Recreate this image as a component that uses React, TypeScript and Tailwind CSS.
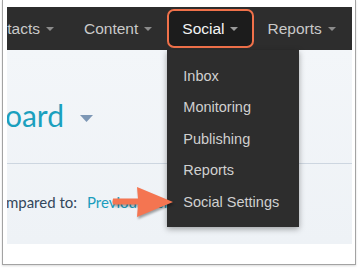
import React from "react";

const Caret = ({ className }: { className: string }) => (
  <svg width="8" height="4" viewBox="0 0 8 4" className={className}>
    <path d="M0 0h8L4 4z" fill="currentColor" />
  </svg>
);

const menuItems = ["Inbox", "Monitoring", "Publishing", "Reports", "Social Settings"];

const App = () => {
  return (
    <div className="w-[358px] h-[268px] bg-white pl-[2px] overflow-hidden">
      {/* screenshot frame */}
      <div className="w-[354px] h-[265px] border-l border-r border-b border-[#a3a3a3] pl-[4px] pt-[7px] shadow-[0_1px_2px_rgba(0,0,0,0.15)]">
        <div className="relative w-[345px] h-[237px] overflow-hidden">
          {/* top nav */}
          <nav
            className="relative z-20 h-[43px] bg-[#2d2d2d] flex items-stretch gap-[30px] text-[15.5px] text-[#c9c9c9]"
            style={{ fontFamily: '"Liberation Sans", Arial, sans-serif' }}
          >
            <div className="flex items-center gap-[6px]">
              <div className="w-[33px] flex justify-end overflow-hidden whitespace-nowrap">
                <span>Contacts</span>
              </div>
              <Caret className="text-[#8b8b8b] mt-[1px]" />
            </div>
            <div className="flex items-center gap-[6px]">
              <span>Content</span>
              <Caret className="text-[#8b8b8b] mt-[1px]" />
            </div>
            <div className="relative flex items-center gap-[5px] text-[#f4f4f4]">
              {/* highlight box */}
              <div className="absolute -left-[15px] -right-[16px] top-[2px] bottom-[2px] rounded-[7px] border-2 border-[#f0714a] bg-[#1c1c1c]" />
              <span className="relative">Social</span>
              <Caret className="relative text-[#9a9a9a] mt-[1px]" />
              {/* dropdown */}
              <ul className="absolute top-full -left-[15px] w-[132px] h-[177px] bg-[#2d2d2d] pt-[11px] pl-[16px] shadow-[0_2px_6px_rgba(0,0,0,0.35)] text-[14.5px] text-[#d0d0d0]">
                {menuItems.map((item) => (
                  <li key={item} className="h-[31.5px] flex items-center whitespace-nowrap">
                    {item}
                  </li>
                ))}
              </ul>
            </div>
            <div className="flex items-center gap-[6px]">
              <span>Reports</span>
              <Caret className="text-[#8b8b8b] mt-[1px]" />
            </div>
          </nav>

          {/* page body */}
          <div
            className="h-[194px] bg-gradient-to-b from-[#f3f6f9] to-[#eef2f6]"
            style={{ fontFamily: "Lato, sans-serif" }}
          >
            <div className="flex items-end pt-[47px] mb-[30px]">
              <div className="w-[57px] flex justify-end overflow-hidden whitespace-nowrap">
                <span className="text-[30px] leading-[36px] text-[#1ba0be]">Dashboard</span>
              </div>
              <svg width="13" height="7" viewBox="0 0 13 7" className="ml-[16px] mb-[11px]">
                <path d="M0 0h13L6.5 7z" fill="#7d97b5" />
              </svg>
            </div>
            <div className="h-px bg-[#cdd6e0]" />
            <div className="flex items-center mt-[28px] text-[15px] leading-[20px]">
              <div className="w-[70px] flex justify-end overflow-hidden whitespace-nowrap text-[#33475b]">
                <span>Compared to:</span>
              </div>
              <span className="ml-[10px] text-[#1b9dbd] whitespace-nowrap">Previous period</span>
            </div>
          </div>

          {/* callout arrow */}
          <svg
            width="64"
            height="34"
            viewBox="0 0 64 34"
            className="absolute left-[105px] top-[179px] z-30 drop-shadow-[1px_2px_1px_rgba(0,0,0,0.35)]"
          >
            <path d="M1 12.5L26 12.5L25 1L61 16L25 31L26 18.5L1 18.5Q0 15.5 1 12.5z" fill="#f47551" />
          </svg>
        </div>
      </div>
    </div>
  );
};

export default App;
